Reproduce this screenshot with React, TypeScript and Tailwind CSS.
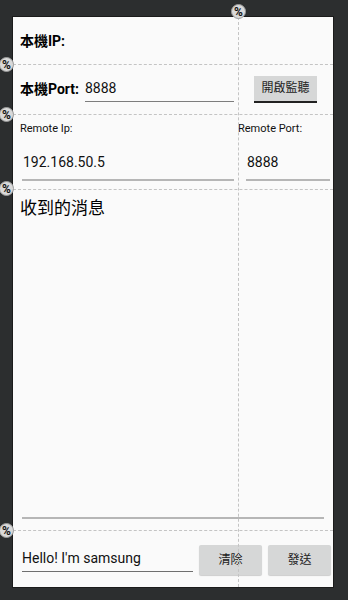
const FONT = { fontFamily: 'Roboto, "Noto Sans CJK TC", sans-serif' };

function Pct({ className }: { className: string }) {
  return (
    <div
      className={`absolute z-10 flex h-[15px] w-[15px] items-center justify-center rounded-full border border-[#9a9a9a] bg-[#d9d9d9] text-[12px] leading-none font-bold text-[#111] ${className}`}
    >
      %
    </div>
  );
}

function Button({ label, className = '' }: { label: string; className?: string }) {
  return (
    <button
      className={`flex h-[30px] items-center justify-center rounded-[2px] bg-[#d6d7d7] text-[12px] text-[#222] shadow-[0_1px_1px_rgba(0,0,0,0.18)] ${className}`}
    >
      {label}
    </button>
  );
}

export default function App() {
  return (
    <div className="relative h-[600px] w-[348px] overflow-hidden bg-[#2c2e2f]" style={FONT}>
      <div className="ml-[12px] mt-[16px] h-[572px] w-[322px] border border-[#1b1b1b] bg-[#fafafa]">
        <div className="relative flex h-full flex-col">
          {/* row 1 */}
          <div className="flex h-[47px] items-center pl-[7px] pt-[1px]">
            <span className="text-[14px] font-bold text-black">本機IP:</span>
          </div>

          {/* row 2 */}
          <div className="flex h-[50px] items-center pl-[7px] pr-[16px]">
            <span className="w-[65px] text-[14px] font-bold text-black">本機Port:</span>
            <div className="mt-[1px] w-[149px] border-b border-[#7d7d7d] pb-[2px] text-[14px] text-[#111]">
              8888
            </div>
            <div className="ml-auto flex h-[27px] w-[63px] items-center justify-center border-b-2 border-[#222] bg-[#d6d7d7] text-[12px] text-[#222]">
              開啟監聽
            </div>
          </div>

          {/* row 3 */}
          <div className="flex h-[75px]">
            <div className="flex w-[225px] flex-col pl-[7px] pr-[4px]">
              <span className="mt-[7px] text-[11px] text-[#111]">Remote Ip:</span>
              <div className="mt-[14px] ml-[2px] border-b-2 border-[#b6b6b6] pb-[6px] pl-[1px] text-[14px] text-[#111]">
                192.168.50.5
              </div>
            </div>
            <div className="flex flex-1 flex-col pr-[3px]">
              <span className="mt-[7px] text-[11px] text-[#111]">Remote Port:</span>
              <div className="mt-[14px] ml-[8px] border-b-2 border-[#b6b6b6] pb-[6px] pl-[1px] text-[14px] text-[#111]">
                8888
              </div>
            </div>
          </div>

          {/* row 4 */}
          <div className="flex h-[341px] flex-col pl-[7px] pr-[9px]">
            <span className="mt-[7px] text-[17px] text-black">收到的消息</span>
            <div className="mt-auto mb-[11px] ml-[2px] border-b-2 border-[#b6b6b6]" />
          </div>

          {/* row 5 */}
          <div className="flex flex-1 items-center pr-[2px] pl-[9px] pt-[2px]">
            <div className="w-[171px] border-b border-[#6f6f6f] pb-[2px] text-[14px] text-[#111]">
              Hello! I'm samsung
            </div>
            <Button label="清除" className="ml-[6px] w-[63px]" />
            <Button label="發送" className="ml-[6px] w-[63px]" />
          </div>

          {/* layout guides */}
          <div className="pointer-events-none absolute inset-x-0 top-[47px] border-t border-dashed border-[#c4c4c4]" />
          <div className="pointer-events-none absolute inset-x-0 top-[97px] border-t border-dashed border-[#c4c4c4]" />
          <div className="pointer-events-none absolute inset-x-0 top-[172px] border-t border-dashed border-[#c4c4c4]" />
          <div className="pointer-events-none absolute inset-x-0 top-[513px] border-t border-dashed border-[#c4c4c4]" />
          <div className="pointer-events-none absolute inset-y-0 left-[225px] border-l border-dashed border-[#c4c4c4]" />
        </div>
      </div>

      <Pct className="left-[231px] top-[4px]" />
      <Pct className="left-[-1px] top-[57px]" />
      <Pct className="left-[-1px] top-[107px]" />
      <Pct className="left-[-1px] top-[181px]" />
      <Pct className="left-[-1px] top-[523px]" />
    </div>
  );
}
